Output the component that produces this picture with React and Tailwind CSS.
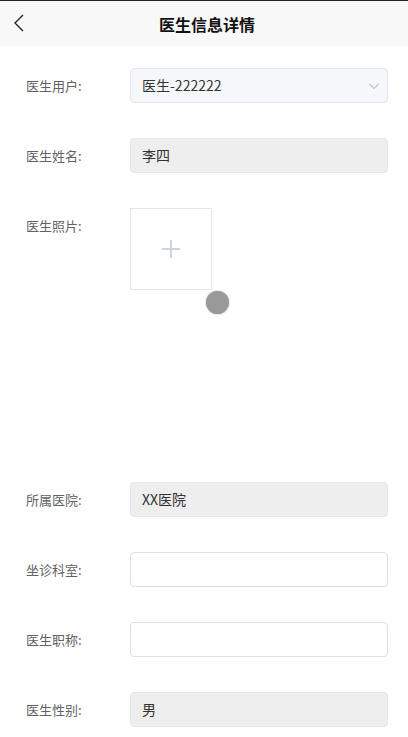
function Row({ label, children }) {
    return (
        <div className="flex items-center pl-[26px] pr-[20px] mb-[35px]">
            <div className="w-[104px] shrink-0 text-[13px] text-[#606266]">{label}</div>
            <div className="flex-1">{children}</div>
        </div>
    );
}

function Field({ value, variant }) {
    const styles = {
        select: 'bg-[#f5f7fa] border-[#e4e7ed]',
        disabled: 'bg-[#eeeeee] border-[#e4e7ed]',
        empty: 'bg-white border-[#dcdfe6]',
    };
    return (
        <div className={`h-[35px] rounded-[4px] border flex items-center justify-between pl-[11px] pr-[7px] text-[14px] text-[#333] ${styles[variant]}`}>
            <span>{value}</span>
            {variant === 'select' && (
                <svg width="12" height="12" viewBox="0 0 12 12" fill="none">
                    <path d="M1.5 4 L6 8.5 L10.5 4" stroke="#c0c4cc" strokeWidth="1.1" />
                </svg>
            )}
        </div>
    );
}

export default function App() {
    return (
        <div className="w-[408px] min-h-[737px] bg-white" style={{ fontFamily: '"Noto Sans CJK SC", "Noto Sans", sans-serif' }}>
            <div className="h-[46px] bg-[#f8f8f8] border-t border-[#222] relative flex items-center justify-center pl-[6px]">
                <svg className="absolute left-[12px] top-[12px]" width="14" height="20" viewBox="0 0 14 20" fill="none">
                    <path d="M11 2 L3 10 L11 18" stroke="#222" strokeWidth="1.4" />
                </svg>
                <span className="text-[16px] font-bold text-[#111]">医生信息详情</span>
            </div>
            <div className="pt-[22px]">
                <Row label="医生用户:"><Field value="医生-222222" variant="select" /></Row>
                <Row label="医生姓名:"><Field value="李四" variant="disabled" /></Row>
                <div className="flex items-start pl-[26px] pr-[20px] h-[274px]">
                    <div className="w-[104px] shrink-0 text-[13px] text-[#606266] leading-[36px]">医生照片:</div>
                    <div className="relative">
                        <div className="w-[82px] h-[82px] border border-[#e6e6e6] flex items-center justify-center">
                            <svg width="20" height="20" viewBox="0 0 20 20">
                                <path d="M10 1 V19 M1 10 H19" stroke="#cfd3da" strokeWidth="2" />
                            </svg>
                        </div>
                        <div className="absolute left-[76px] top-[83px] w-[23px] h-[23px] rounded-full bg-[#999] shadow-[0_0_2px_#aaa]" />
                    </div>
                </div>
                <Row label="所属医院:"><Field value="XX医院" variant="disabled" /></Row>
                <Row label="坐诊科室:"><Field value="" variant="empty" /></Row>
                <Row label="医生职称:"><Field value="" variant="empty" /></Row>
                <Row label="医生性别:"><Field value="男" variant="disabled" /></Row>
            </div>
        </div>
    );
}
